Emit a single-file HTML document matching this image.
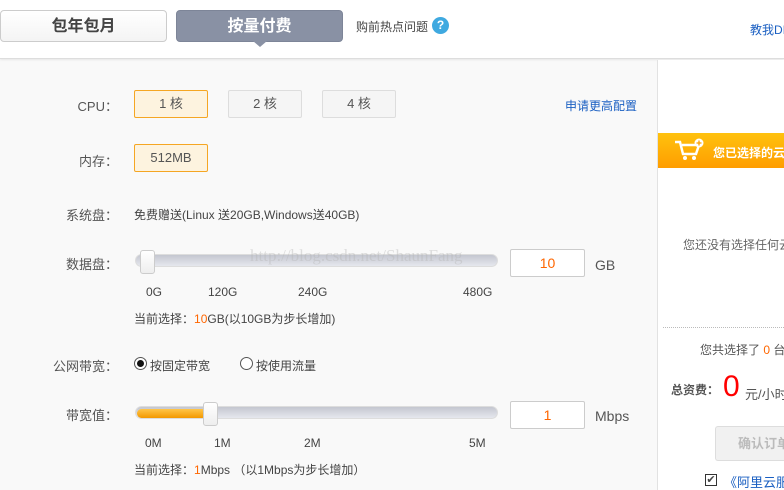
<!DOCTYPE html>
<html><head><meta charset="utf-8"><style>
*{margin:0;padding:0;box-sizing:border-box}
html,body{width:784px;height:490px;overflow:hidden}
body{position:relative;background:#f9f9f9;font-family:"Liberation Sans","Noto Sans CJK SC",sans-serif;color:#444;font-size:12px}
.a{position:absolute;white-space:nowrap}
.hdr{position:absolute;left:0;top:0;width:784px;height:59px;background:#fff;border-bottom:1px solid #ddd;box-shadow:0 1px 2px rgba(0,0,0,.08)}
.tab{position:absolute;top:10px;height:32px;border-radius:4px;font-size:16px;font-weight:bold;text-align:center;line-height:31px}
.btn{position:absolute;height:28px;border:1px solid #ddd;border-radius:2px;background:#f5f5f5;text-align:center;line-height:26px;font-size:13px;color:#555}
.sel{background:#fdf3df;border-color:#f5a623}
.lbl{position:absolute;font-size:13px;color:#555;text-align:right;width:80px}
.track{position:absolute;height:13px;border:1px solid #ddd;border-radius:7px;background:linear-gradient(#c4c7d0,#e6e8ee);}
.thumb{position:absolute;width:15px;height:24px;border:1px solid #ccc;border-radius:3px;background:linear-gradient(#fff,#eee)}
.inp{position:absolute;width:75px;height:28px;border:1px solid #ccc;border-radius:2px;background:#fff;color:#f60;font-size:14px;line-height:26px;text-align:center}
.tick{position:absolute;font-size:12px;color:#444}
.o{color:#f60}
</style></head><body>
<div class="hdr"></div>
<div class="tab" style="left:0;width:167px;border:1px solid #ccc;background:linear-gradient(#fff,#f4f4f4);color:#444">包年包月</div>
<div class="tab" style="left:176px;width:167px;background:#8991a4;color:#fff;border:1px solid #7d8598">按量付费</div>
<div class="a" style="left:253px;top:41px;width:0;height:0;border-left:7px solid transparent;border-right:7px solid transparent;border-top:6px solid #8991a4"></div>
<div class="a" style="left:356px;top:18px;font-size:12px;color:#444">购前热点问题</div>
<div class="a" style="left:432px;top:17px;width:17px;height:17px;border-radius:50%;background:#3fa9e0;color:#fff;font-weight:bold;font-size:12px;text-align:center;line-height:17px">?</div>
<div class="a" style="left:750px;top:21px;color:#1a5fc2;width:34px;overflow:hidden">教我DIY</div>

<div class="a" style="left:657px;top:60px;width:127px;height:430px;background:#fff;border-left:1px solid #e2e2e2;overflow:hidden"></div>
<div class="a" style="left:658px;top:133px;width:126px;height:35px;background:linear-gradient(#ffc20e,#ff9d00)"></div>
<svg class="a" style="left:674px;top:138px" width="30" height="24" viewBox="0 0 30 24"><path d="M1 4h5l3 12h13l3-9H8" fill="none" stroke="#fff" stroke-width="2.5"/><circle cx="11" cy="20" r="2" fill="#fff"/><circle cx="20" cy="20" r="2" fill="#fff"/><circle cx="25" cy="5" r="4.5" fill="#fff"/><path d="M25 2.5v5M22.5 5h5" stroke="#f9a000" stroke-width="1.3"/></svg>
<div class="a" style="left:713px;top:144px;color:#fff;font-weight:bold;width:71px;overflow:hidden">您已选择的云服务器</div>
<div class="a" style="left:683px;top:236px;color:#666;width:101px;overflow:hidden">您还没有选择任何云服务器</div>
<div class="a" style="left:663px;top:327px;width:121px;border-top:1px dotted #bbb"></div>
<div class="a" style="left:700px;top:341px;color:#555;width:84px;overflow:hidden">您共选择了 <span class="o">0</span> 台</div>
<div class="a" style="left:671px;top:381px;font-weight:bold;color:#555">总资费：</div>
<div class="a" style="left:723px;top:370px;font-size:30px;color:#f00">0</div>
<div class="a" style="left:745px;top:384px;font-size:13px;color:#555;width:39px;overflow:hidden">元/小时</div>
<div class="a" style="left:715px;top:426px;width:69px;height:35px;border:1px solid #ddd;border-right:none;border-radius:3px 0 0 3px;background:#f1f1f1;color:#bbb;font-weight:bold;font-size:13px;line-height:33px;padding-left:22px;overflow:hidden">确认订单</div>
<div class="a" style="left:705px;top:474px;width:12px;height:12px;border:1px solid #333;background:#fff;font-size:11px;line-height:10px;text-align:center">✔</div>
<div class="a" style="left:724px;top:472px;color:#1a5fc2;font-size:13px;width:60px;overflow:hidden">《阿里云服务条款》</div>

<div class="lbl" style="left:38px;top:96px">CPU：</div>
<div class="btn sel" style="left:134px;top:90px;width:74px">1 核</div>
<div class="btn" style="left:228px;top:90px;width:74px">2 核</div>
<div class="btn" style="left:322px;top:90px;width:74px">4 核</div>
<div class="a" style="left:565px;top:97px;color:#1a5fc2">申请更高配置</div>
<div class="lbl" style="left:38px;top:151px">内存：</div>
<div class="btn sel" style="left:134px;top:144px;width:74px">512MB</div>
<div class="lbl" style="left:38px;top:205px">系统盘：</div>
<div class="a" style="left:134px;top:206px">免费赠送(Linux 送20GB,Windows送40GB)</div>

<div class="lbl" style="left:38px;top:254px">数据盘：</div>
<div class="track" style="left:135px;top:254px;width:363px"></div>
<div class="thumb" style="left:140px;top:250px"></div>
<div class="a" style="left:250px;top:246px;font-family:'Liberation Serif',serif;font-size:17px;color:rgba(180,180,180,.4)">http://blog.csdn.net/ShaunFang</div>
<div class="inp" style="left:510px;top:249px">10</div>
<div class="a" style="left:595px;top:257px;font-size:14px;color:#555">GB</div>
<div class="tick" style="left:146px;top:285px">0G</div>
<div class="tick" style="left:208px;top:285px">120G</div>
<div class="tick" style="left:298px;top:285px">240G</div>
<div class="tick" style="left:463px;top:285px">480G</div>
<div class="a" style="left:134px;top:310px">当前选择：<span class="o">10</span>GB(以10GB为步长增加)</div>

<div class="lbl" style="left:38px;top:356px">公网带宽：</div>
<div class="a" style="left:134px;top:357px;width:13px;height:13px;border:1px solid #555;border-radius:50%;background:#fff"><div style="margin:2px;width:7px;height:7px;border-radius:50%;background:#111"></div></div>
<div class="a" style="left:150px;top:357px">按固定带宽</div>
<div class="a" style="left:240px;top:357px;width:13px;height:13px;border:1px solid #555;border-radius:50%;background:#fff"></div>
<div class="a" style="left:256px;top:357px">按使用流量</div>

<div class="lbl" style="left:38px;top:405px">带宽值：</div>
<div class="track" style="left:135px;top:406px;width:363px"></div>
<div class="a" style="left:137px;top:409px;width:70px;height:9px;border-radius:5px;background:linear-gradient(#ffc64a,#f39800)"></div>
<div class="thumb" style="left:203px;top:402px"></div>
<div class="inp" style="left:510px;top:401px">1</div>
<div class="a" style="left:595px;top:408px;font-size:14px;color:#555">Mbps</div>
<div class="tick" style="left:145px;top:436px">0M</div>
<div class="tick" style="left:214px;top:436px">1M</div>
<div class="tick" style="left:304px;top:436px">2M</div>
<div class="tick" style="left:469px;top:436px">5M</div>
<div class="a" style="left:134px;top:461px">当前选择：<span class="o">1</span>Mbps （以1Mbps为步长增加）</div>
</body></html>
